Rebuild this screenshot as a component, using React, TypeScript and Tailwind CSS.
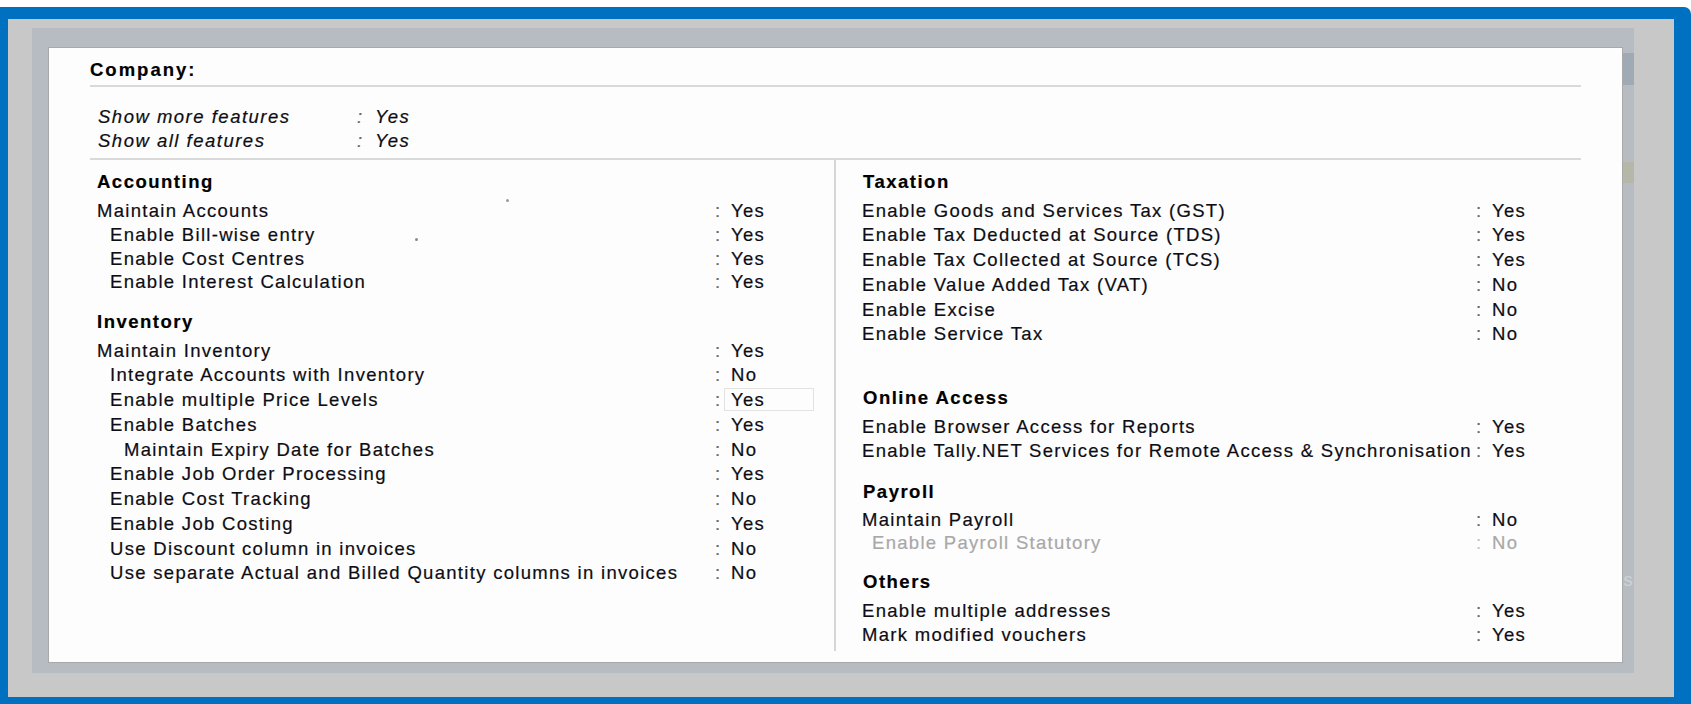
import React from 'react';

// Tally "Company Features" screen

type Item = { label: string; value: string; indent?: string; muted?: boolean; boxed?: boolean };
type Section = { title: string; mt: string; rowH: string; rows: Item[] };

const left: Section[] = [
  {
    title: 'Accounting',
    mt: 'mt-0',
    rowH: 'h-[23.75px]',
    rows: [
      { label: 'Maintain Accounts', value: 'Yes' },
      { label: 'Enable Bill-wise entry', value: 'Yes', indent: 'pl-[13px]' },
      { label: 'Enable Cost Centres', value: 'Yes', indent: 'pl-[13px]' },
      { label: 'Enable Interest Calculation', value: 'Yes', indent: 'pl-[13px]' },
    ],
  },
  {
    title: 'Inventory',
    mt: 'mt-[12px]',
    rowH: 'h-[24.75px]',
    rows: [
      { label: 'Maintain Inventory', value: 'Yes' },
      { label: 'Integrate Accounts with Inventory', value: 'No', indent: 'pl-[13px]' },
      { label: 'Enable multiple Price Levels', value: 'Yes', indent: 'pl-[13px]', boxed: true },
      { label: 'Enable Batches', value: 'Yes', indent: 'pl-[13px]' },
      { label: 'Maintain Expiry Date for Batches', value: 'No', indent: 'pl-[27px]' },
      { label: 'Enable Job Order Processing', value: 'Yes', indent: 'pl-[13px]' },
      { label: 'Enable Cost Tracking', value: 'No', indent: 'pl-[13px]' },
      { label: 'Enable Job Costing', value: 'Yes', indent: 'pl-[13px]' },
      { label: 'Use Discount column in invoices', value: 'No', indent: 'pl-[13px]' },
      { label: 'Use separate Actual and Billed Quantity columns in invoices', value: 'No', indent: 'pl-[13px]' },
    ],
  },
];

const right: Section[] = [
  {
    title: 'Taxation',
    mt: 'mt-0',
    rowH: 'h-[24.75px]',
    rows: [
      { label: 'Enable Goods and Services Tax (GST)', value: 'Yes' },
      { label: 'Enable Tax Deducted at Source (TDS)', value: 'Yes' },
      { label: 'Enable Tax Collected at Source (TCS)', value: 'Yes' },
      { label: 'Enable Value Added Tax (VAT)', value: 'No' },
      { label: 'Enable Excise', value: 'No' },
      { label: 'Enable Service Tax', value: 'No' },
    ],
  },
  {
    title: 'Online Access',
    mt: 'mt-[35.5px]',
    rowH: 'h-[24.75px]',
    rows: [
      { label: 'Enable Browser Access for Reports', value: 'Yes' },
      { label: 'Enable Tally.NET Services for Remote Access & Synchronisation', value: 'Yes' },
    ],
  },
  {
    title: 'Payroll',
    mt: 'mt-[12px]',
    rowH: 'h-[23.75px]',
    rows: [
      { label: 'Maintain Payroll', value: 'No' },
      { label: 'Enable Payroll Statutory', value: 'No', indent: 'pl-[10px]', muted: true },
    ],
  },
  {
    title: 'Others',
    mt: 'mt-[11px]',
    rowH: 'h-[24.75px]',
    rows: [
      { label: 'Enable multiple addresses', value: 'Yes' },
      { label: 'Mark modified vouchers', value: 'Yes' },
    ],
  },
];

function Row({ item, labelW, rowH }: { item: Item; labelW: string; rowH: string }) {
  const tone = item.muted ? 'text-[#a8a8a8]' : 'text-[#0d0d14]';
  return (
    <div className={`flex items-center ${rowH} whitespace-nowrap ${tone}`}>
      <div className={`${labelW} shrink-0 ${item.indent ?? 'pl-0'}`}>{item.label}</div>
      <div className={`w-[9px] shrink-0 ${item.muted ? 'text-[#c4c4c4]' : 'text-[#666]'}`}>:</div>
      <div
        className={`w-[90px] h-[23px] flex items-center pl-[6px] border ${
          item.boxed ? 'border-[#e2e2e2]' : 'border-transparent'
        }`}
      >
        {item.value}
      </div>
    </div>
  );
}

function Block({ s, labelW, headPad, rowPad }: { s: Section; labelW: string; headPad: string; rowPad: string }) {
  return (
    <div className={s.mt}>
      <div className={`h-[32px] flex items-center font-bold tracking-[1.5px] text-black ${headPad}`}>{s.title}</div>
      <div className={rowPad}>
        {s.rows.map((r) => (
          <Row key={r.label} item={r} labelW={labelW} rowH={s.rowH} />
        ))}
      </div>
    </div>
  );
}

export default function App() {
  return (
    <div
      className="w-full h-[704px] bg-white pt-[7px] overflow-hidden text-[18.5px] tracking-[1.3px] [-webkit-text-stroke:0.2px_currentColor]"
      style={{ fontFamily: '"Liberation Sans", Arial, sans-serif' }}
    >
      <div className="h-full bg-[#0070c0] rounded-tr-[7px] pt-[12px] pl-[8px] pr-[17px] pb-[7px]">
        <div className="h-full bg-[#c8c8c8] pt-[9px] pl-[24px] pr-[40px] pb-[24px]">
          <div className="h-full flex bg-[#b6bcc1] pt-[19px] pl-[16px] pb-[10px]">
            {/* panel */}
            <div className="flex-1 flex flex-col bg-[#fdfdfd] border border-[#a9a9a9] px-[41px] pt-[9px] pb-[11px]">
              <div className="h-[26px] flex items-center font-bold tracking-[2px] text-black">Company:</div>
              <div className="mt-[2px] h-[2px] bg-[#d9d9d9]" />

              <div className="mt-[18px] pl-[8px] italic tracking-[1.5px] text-[#0d0d14]">
                {['Show more features', 'Show all features'].map((l) => (
                  <div key={l} className="flex items-center h-[24px] whitespace-nowrap">
                    <div className="w-[259px]">{l}</div>
                    <div className="w-[18px] text-[#666]">:</div>
                    <div>Yes</div>
                  </div>
                ))}
              </div>
              <div className="mt-[5px] h-[2px] bg-[#d9d9d9]" />

              <div className="flex h-[491px]">
                <div className="relative w-[744px] shrink-0 pt-[6px] pl-[7px]">
                  {left.map((s, i) => (
                    <Block key={s.title} s={s} labelW="w-[618px]" headPad="pl-0" rowPad={i === 0 ? 'pt-[1px]' : 'pt-0'} />
                  ))}
                  <span className="absolute left-[416px] top-[39px] w-[3px] h-[3px] rounded-full bg-[#9a9a9a]" />
                  <span className="absolute left-[325px] top-[78px] w-[3px] h-[3px] rounded-full bg-[#8a8a8a]" />
                </div>
                <div className="flex-1 border-l-2 border-[#d6d6d6] pt-[6px] pl-[26px]">
                  {right.map((s) => (
                    <Block key={s.title} s={s} labelW="w-[614px]" headPad="pl-[1px]" rowPad="pt-0" />
                  ))}
                </div>
              </div>
            </div>

            {/* bits of the window behind */}
            <div className="w-[11px] shrink-0 flex flex-col overflow-hidden">
              <div className="h-[6px]" />
              <div className="h-[32px] bg-[#a0aab4]" />
              <div className="h-[77px]" />
              <div className="h-[21px] bg-[#b5b8a9]" />
              <div className="h-[385px]" />
              <div className="h-[24px] flex items-center justify-end text-[#cdd1d5] whitespace-nowrap">ts</div>
            </div>
          </div>
        </div>
      </div>
    </div>
  );
}
